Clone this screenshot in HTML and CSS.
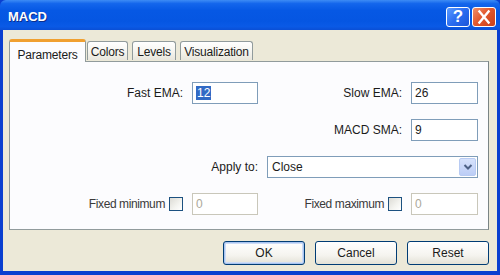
FILE: index.html
```html
<!DOCTYPE html>
<html lang="en">
<head>
    <meta charset="UTF-8">
    <title>MACD</title>
    <link rel="stylesheet" href="styles.css">
</head>
<body>
    <div class="window">
        <div class="titlebar">
            <span class="title">MACD</span>
            <div class="title-buttons">
                <span class="tb-btn tb-help">?</span>
                <span class="tb-btn tb-close">
                    <svg viewBox="0 0 24 20" width="24" height="20">
                        <path d="M7 4 L17 16 M17 4 L7 16" stroke="#fff" stroke-width="2.6" stroke-linecap="square"/>
                    </svg>
                </span>
            </div>
        </div>

        <div class="client">
            <div class="tabs">
                <div class="tab active">Parameters</div>
                <div class="tab tab-colors">Colors</div>
                <div class="tab tab-levels">Levels</div>
                <div class="tab tab-vis">Visualization</div>
            </div>

            <div class="panel">
                <div class="form">
                    <label class="lbl">Fast EMA:</label>
                    <div class="field"><span class="selected-text">12</span></div>
                    <label class="lbl">Slow EMA:</label>
                    <div class="field">26</div>

                    <div class="spacer"></div>
                    <div class="spacer"></div>
                    <label class="lbl">MACD SMA:</label>
                    <div class="field">9</div>

                    <label class="lbl wide">Apply to:</label>
                    <div class="select wide">
                        <span>Close</span>
                        <span class="drop">
                            <svg viewBox="0 0 10 8" width="10" height="8">
                                <path d="M1.5 2 L5 5.5 L8.5 2" stroke="#4d6185" stroke-width="2" fill="none"/>
                            </svg>
                        </span>
                    </div>

                    <div class="lbl check-lbl">Fixed minimum <span class="checkbox"></span></div>
                    <div class="field disabled">0</div>
                    <div class="lbl check-lbl">Fixed maximum <span class="checkbox"></span></div>
                    <div class="field disabled">0</div>
                </div>
            </div>

            <div class="buttons">
                <button class="btn btn-default">OK</button>
                <button class="btn">Cancel</button>
                <button class="btn">Reset</button>
            </div>
        </div>
    </div>
</body>
</html>
```

FILE: styles.css
```css
* {
    margin: 0;
    padding: 0;
    box-sizing: border-box;
}

body {
    font-family: 'Liberation Sans', Arial, sans-serif;
    font-size: 12px;
    color: #1b1b1b;
    background: #ece9d8;
}

.window {
    width: 500px;
    height: 275px;
    display: flex;
    flex-direction: column;
    background: #0a3fd0;
    padding: 0 3px 4px;
    overflow: hidden;
}

/* title bar */
.titlebar {
    height: 30px;
    margin: 0 -3px;
    padding: 0 4px 0 8px;
    display: flex;
    align-items: center;
    justify-content: space-between;
    background: linear-gradient(to bottom, #3d8cf5 0%, #1466ec 12%, #0658e4 35%, #0556e2 70%, #0a5ae6 88%, #0a4fd6 100%);
    border-radius: 6px 6px 0 0;
}

.title {
    color: #fff;
    font-weight: bold;
    font-size: 13px;
    text-shadow: 1px 1px 0 #0b2e8c;
    padding-top: 3px;
}

.title-buttons {
    display: flex;
    gap: 2px;
    padding-top: 4px;
}

.tb-btn {
    width: 24px;
    height: 20px;
    border: 1px solid #fff;
    border-radius: 3px;
    display: flex;
    align-items: center;
    justify-content: center;
    color: #fff;
    font-weight: bold;
    font-size: 17px;
}

.tb-help {
    background: linear-gradient(135deg, #5a9bff 0%, #2a6cf0 50%, #1c55d8 100%);
}

.tb-close {
    background: linear-gradient(135deg, #f0906a 0%, #e2582e 45%, #c9401a 100%);
}

/* client area */
.client {
    flex: 1;
    background: #ece9d8;
    padding: 9px 8px 0 6px;
    display: flex;
    flex-direction: column;
}

.tabs {
    display: flex;
    align-items: flex-end;
    height: 22px;
    position: relative;
    z-index: 1;
}

.tab {
    height: 19px;
    padding: 3px 0 0;
    text-align: center;
    border: 1px solid #919b9c;
    border-bottom: none;
    border-radius: 3px 3px 0 0;
    background: linear-gradient(to bottom, #ffffff 0%, #f6f5f0 50%, #e8e6dc 100%);
    margin-bottom: 1px;
    letter-spacing: -0.2px;
}

.tab.active {
    width: 77px;
    height: 23px;
    padding-top: 6px;
    background: #fcfcfe;
    border-top: 3px solid #f0a030;
    margin-bottom: -1px;
}

.tab-colors {
    width: 41px;
    margin-left: 1px;
}

.tab-levels {
    width: 44px;
    margin-left: 4px;
}

.tab-vis {
    width: 73px;
    margin-left: 4px;
}

.panel {
    height: 169px;
    background: #fcfcfe;
    border: 1px solid #919b9c;
    border-right-color: #7a8485;
    padding-top: 20px;
}

.form {
    display: grid;
    grid-template-columns: 173px 66px 135px 67px;
    grid-auto-rows: 22px;
    column-gap: 9px;
    row-gap: 15px;
}

.lbl {
    display: flex;
    align-items: center;
    justify-content: flex-end;
    white-space: nowrap;
}

.wide {
    grid-column: span 2;
}

.field {
    border: 1px solid #7f9db9;
    background: #fff;
    padding: 3px 3px 0;
    line-height: 14px;
}

.selected-text {
    background: #316ac5;
    color: #fff;
    padding: 0 1px;
}

.field.disabled {
    border-color: #c9c7ba;
    color: #aca899;
    background: #fff;
}

.select {
    border: 1px solid #7f9db9;
    background: #fff;
    display: flex;
    align-items: center;
    justify-content: space-between;
    padding: 0 1px 0 4px;
}

.drop {
    width: 17px;
    height: 18px;
    border-radius: 2px;
    background: linear-gradient(to bottom, #d6e2fc 0%, #bccdf6 100%);
    border: 1px solid #b8cbf3;
    display: flex;
    align-items: center;
    justify-content: center;
}

.check-lbl {
    gap: 4px;
    color: #3a3a3a;
    letter-spacing: -0.4px;
}

.checkbox {
    width: 14px;
    height: 14px;
    border: 1px solid #1c5180;
    background: linear-gradient(135deg, #dcdbd5 0%, #f4f4f0 60%, #ffffff 100%);
}

/* dialog buttons */
.buttons {
    display: flex;
    justify-content: flex-end;
    gap: 10px;
    margin-top: 11px;
}

.btn {
    width: 82px;
    height: 24px;
    font-family: inherit;
    font-size: 12px;
    color: #1b1b1b;
    border: 1px solid #003c74;
    border-radius: 3px;
    background: linear-gradient(to bottom, #ffffff 0%, #f5f4ef 60%, #e3e1d6 100%);
}

.btn-default {
    box-shadow: inset 0 0 0 1px #a8c4f0, inset 0 0 0 2px #cddcf6;
}
```
